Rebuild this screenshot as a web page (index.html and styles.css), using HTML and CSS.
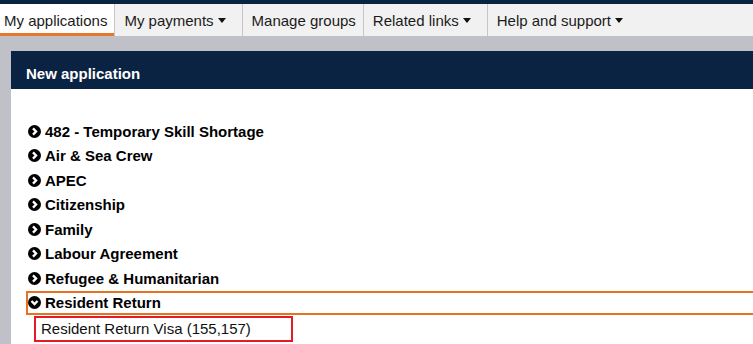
FILE: index.html
```html
<!DOCTYPE html>
<html lang="en">
<head>
  <meta charset="UTF-8">
  <meta name="viewport" content="width=device-width, initial-scale=1.0">
  <title>My applications</title>
  <link rel="stylesheet" href="styles.css">
</head>
<body>
  <!-- Barra superior -->
  <div class="topbar"></div>

  <!-- Navegación -->
  <div class="nav">
    <a href="#" class="tab active">My applications</a>
    <a href="#" class="tab">My payments <span class="caret"></span></a>
    <a href="#" class="tab">Manage groups</a>
    <a href="#" class="tab">Related links <span class="caret"></span></a>
    <a href="#" class="tab last">Help and support <span class="caret"></span></a>
  </div>

  <!-- Contenido -->
  <div class="page">
    <div class="panel">
      <div class="panel-head">New application</div>
      <div class="panel-body">
        <div class="item"><svg class="ico" viewBox="0 0 12 12"><circle cx="6" cy="6" r="6"/><path d="M4.6 3.2 7.4 6 4.6 8.8"/></svg>482 - Temporary Skill Shortage</div>
        <div class="item"><svg class="ico" viewBox="0 0 12 12"><circle cx="6" cy="6" r="6"/><path d="M4.6 3.2 7.4 6 4.6 8.8"/></svg>Air &amp; Sea Crew</div>
        <div class="item"><svg class="ico" viewBox="0 0 12 12"><circle cx="6" cy="6" r="6"/><path d="M4.6 3.2 7.4 6 4.6 8.8"/></svg>APEC</div>
        <div class="item"><svg class="ico" viewBox="0 0 12 12"><circle cx="6" cy="6" r="6"/><path d="M4.6 3.2 7.4 6 4.6 8.8"/></svg>Citizenship</div>
        <div class="item"><svg class="ico" viewBox="0 0 12 12"><circle cx="6" cy="6" r="6"/><path d="M4.6 3.2 7.4 6 4.6 8.8"/></svg>Family</div>
        <div class="item"><svg class="ico" viewBox="0 0 12 12"><circle cx="6" cy="6" r="6"/><path d="M4.6 3.2 7.4 6 4.6 8.8"/></svg>Labour Agreement</div>
        <div class="item"><svg class="ico" viewBox="0 0 12 12"><circle cx="6" cy="6" r="6"/><path d="M4.6 3.2 7.4 6 4.6 8.8"/></svg>Refugee &amp; Humanitarian</div>
        <div class="item open"><svg class="ico" viewBox="0 0 12 12"><circle cx="6" cy="6" r="6"/><path d="M3.2 4.6 6 7.4 8.8 4.6"/></svg>Resident Return</div>
        <div class="sub"><a href="#">Resident Return Visa (155,157)</a></div>
      </div>
    </div>
  </div>
</body>
</html>
```

FILE: styles.css
```css
/* Estilos generales */
body {
  margin: 0;
  font-family: "Liberation Sans", Arial, sans-serif;
  background-color: #c0c0c8;
  overflow: hidden;
}

.topbar {
  height: 4px;
  background-color: #0b2343;
}

/* Navegación */
.nav {
  display: flex;
  height: 32px;
  background-color: #f1f1f1;
}

.tab {
  display: flex;
  align-items: center;
  padding: 0 7px 0 9px;
  border-right: 1px solid #c6c6c6;
  font-size: 15px;
  color: #1b1b1b;
  text-decoration: none;
}

.tab.active {
  background-color: #fff;
  padding-left: 4px;
  box-shadow: inset 0 -3px 0 #e8772e;
}

.tab.last {
  border-right: none;
}

.caret {
  display: inline-block;
  margin: 0 9px 0 4px;
  border-top: 5px solid #111;
  border-left: 4px solid transparent;
  border-right: 4px solid transparent;
}

/* Panel */
.page {
  padding: 15px 0 0 11px;
}

.panel {
  background-color: #fff;
  height: 300px;
}

.panel-head {
  height: 31px;
  line-height: 31px;
  padding: 7px 0 0 15px;
  background-color: #0b2343;
  color: #fff;
  font-size: 15px;
  font-weight: bold;
}

.panel-body {
  padding: 30px 0 0 15px;
}

.item {
  display: flex;
  align-items: center;
  height: 20.5px;
  border: 2px solid transparent;
  font-size: 15px;
  font-weight: bold;
  color: #000;
}

.item.open {
  border-color: #e8731e;
  margin-right: -10px;
}

.ico {
  width: 13px;
  height: 13px;
  margin-right: 4px;
  flex: none;
}

.ico path {
  fill: none;
  stroke: #fff;
  stroke-width: 2.2;
}

.sub {
  margin: 1px 0 0 8px;
}

.sub a {
  display: block;
  width: 259px;
  height: 26px;
  box-sizing: border-box;
  padding-left: 5px;
  border: 2px solid #e41b25;
  line-height: 22px;
  font-size: 15px;
  color: #111;
  text-decoration: none;
}
```
